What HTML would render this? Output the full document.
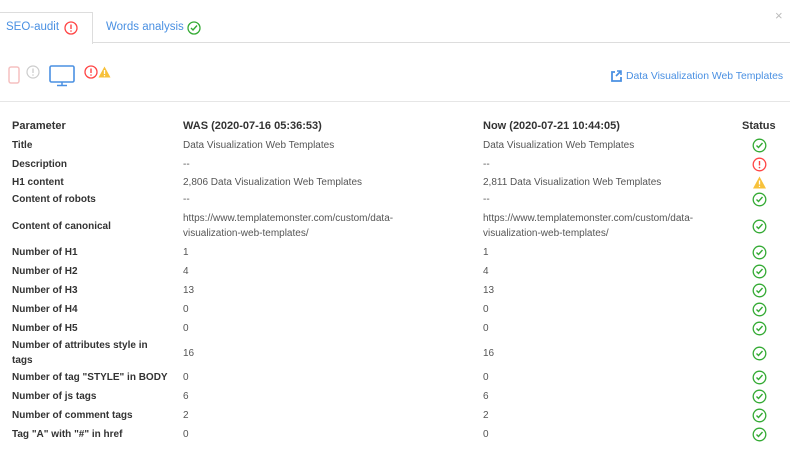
<!DOCTYPE html>
<html><head><meta charset="utf-8"><style>
body{margin:0;width:790px;height:450px;background:#fff;font-family:"Liberation Sans",Arial,sans-serif;position:relative;overflow:hidden;color:#444}
.a{position:absolute;white-space:nowrap}
.tabline{position:absolute;left:0;top:42px;width:790px;height:1px;background:#ddd}
.tab1{position:absolute;left:-1px;top:12px;width:92px;height:31px;border:1px solid #ddd;border-bottom:none;background:#fff}
.hdr{position:absolute;left:0;top:101px;width:790px;height:1px;background:#e6e6e6}
.p{left:12px;font-size:10px;color:#333;font-weight:bold}
.v{font-size:10px;color:#555;line-height:15px}
.h{font-size:11px;font-weight:bold;color:#333}
.ic{position:absolute;left:752px}
</style></head><body>
<div class="tabline"></div>
<div class="tab1"></div>
<div class="a" style="left:6px;top:21px;font-size:11.5px;color:#4a90e2">SEO-audit</div>
<svg class="a" style="left:64px;top:21px" width="14" height="14"><circle cx="7" cy="7" r="6" fill="none" stroke="#f44" stroke-width="1.3"/><line x1="7" y1="3.5" x2="7" y2="8" stroke="#f44" stroke-width="1.4"/><circle cx="7" cy="10" r=".8" fill="#f44"/></svg>
<div class="a" style="left:106px;top:21px;font-size:11.5px;color:#4a90e2">Words analysis</div>
<svg class="a" style="left:187px;top:21px" width="14" height="14"><circle cx="7" cy="7" r="6" fill="none" stroke="#3a3" stroke-width="1.3"/><path d="M4 7l2 2 4-4.5" fill="none" stroke="#3a3" stroke-width="1.4"/></svg>
<div class="a" style="left:775px;top:8px;font-size:13px;color:#bbb">×</div>
<svg class="a" style="left:8px;top:66px" width="12" height="18"><rect x="1" y="1" width="10" height="16" rx="2" fill="none" stroke="#f5c0c0" stroke-width="1.5"/></svg>
<svg class="a" style="left:26px;top:65px" width="14" height="14"><circle cx="7" cy="7" r="6" fill="none" stroke="#ccc" stroke-width="1.2"/><line x1="7" y1="3.5" x2="7" y2="8" stroke="#ccc" stroke-width="1.3"/><circle cx="7" cy="10" r=".8" fill="#ccc"/></svg>
<svg class="a" style="left:49px;top:65px" width="28" height="22"><rect x="1" y="1" width="24" height="16" rx="1.5" fill="none" stroke="#4a90e2" stroke-width="1.6"/><line x1="13" y1="17" x2="13" y2="20" stroke="#4a90e2" stroke-width="1.5"/><line x1="8" y1="20.5" x2="18" y2="20.5" stroke="#4a90e2" stroke-width="1.5"/></svg>
<svg class="a" style="left:84px;top:65px" width="14" height="14"><circle cx="7" cy="7" r="6" fill="none" stroke="#f44" stroke-width="1.3"/><line x1="7" y1="3.5" x2="7" y2="8" stroke="#f44" stroke-width="1.4"/><circle cx="7" cy="10" r=".8" fill="#f44"/></svg>
<svg class="a" style="left:98px;top:66px" width="13" height="12"><path d="M6.5 0.5L12.5 11.5H0.5Z" fill="#f7c13a"/><line x1="6.5" y1="4" x2="6.5" y2="8" stroke="#fff" stroke-width="1.3"/><circle cx="6.5" cy="9.7" r=".7" fill="#fff"/></svg>
<svg class="a" style="left:610px;top:70px" width="12" height="12"><path d="M5 2H2v9h9V7" fill="none" stroke="#4a90e2" stroke-width="1.8"/><path d="M6 6L11 1M7 1h4v4" fill="none" stroke="#4a90e2" stroke-width="1.6"/></svg>
<div class="a" style="left:626px;top:71px;font-size:10.4px;color:#4a90e2">Data Visualization Web Templates</div>
<div class="hdr"></div>

<div class="a h" style="left:12px;top:120px">Parameter</div>
<div class="a h" style="left:183px;top:120px">WAS (2020-07-16 05:36:53)</div>
<div class="a h" style="left:483px;top:120px">Now (2020-07-21 10:44:05)</div>
<div class="a h" style="left:742px;top:120px">Status</div>

<div id="rows"></div>
<script>
var ok='<svg width="15" height="15"><circle cx="7.5" cy="7.5" r="6.3" fill="none" stroke="#3a3" stroke-width="1.3"/><path d="M4.5 7.5l2 2 4-4.5" fill="none" stroke="#3a3" stroke-width="1.4"/></svg>';
var er='<svg width="15" height="15"><circle cx="7.5" cy="7.5" r="6.3" fill="none" stroke="#f44" stroke-width="1.3"/><line x1="7.5" y1="4" x2="7.5" y2="8.5" stroke="#f44" stroke-width="1.4"/><circle cx="7.5" cy="10.6" r=".8" fill="#f44"/></svg>';
var wa='<svg width="15" height="15"><path d="M7.5 1.5L14 13.5H1Z" fill="#f7c13a"/><line x1="7.5" y1="5.5" x2="7.5" y2="9.5" stroke="#fff" stroke-width="1.3"/><circle cx="7.5" cy="11.4" r=".7" fill="#fff"/></svg>';
var R=[[145,"Title","Data Visualization Web Templates","Data Visualization Web Templates",ok],
[164,"Description","--","--",er],
[182,"H1 content","2,806 Data Visualization Web Templates","2,811 Data Visualization Web Templates",wa],
[199,"Content of robots","--","--",ok],
[226,"Content of canonical","https://www.templatemonster.com/custom/data-<br>visualization-web-templates/","https://www.templatemonster.com/custom/data-<br>visualization-web-templates/",ok],
[252,"Number of H1","1","1",ok],[271,"Number of H2","4","4",ok],[290,"Number of H3","13","13",ok],
[309,"Number of H4","0","0",ok],[328,"Number of H5","0","0",ok],
[353,"Number of attributes style in<br>tags","16","16",ok],
[377,'Number of tag "STYLE" in BODY',"0","0",ok],[396,"Number of js tags","6","6",ok],
[415,"Number of comment tags","2","2",ok],[434,'Tag "A" with "#" in href',"0","0",ok]];
var h='';
R.forEach(function(r){
 var two=r[2].indexOf('<br>')>=0, tp=r[1].indexOf('<br>')>=0;
 h+='<div class="a p v" style="top:'+(r[0]-(tp?15:7.5))+'px;color:#333">'+r[1]+'</div>';
 h+='<div class="a v" style="left:183px;top:'+(r[0]-(two?15:7.5))+'px">'+r[2]+'</div>';
 h+='<div class="a v" style="left:483px;top:'+(r[0]-(two?15:7.5))+'px">'+r[3]+'</div>';
 h+='<div class="ic" style="top:'+(r[0]-7.5)+'px">'+r[4]+'</div>';
});
document.getElementById('rows').innerHTML=h;
</script>
</body></html>
